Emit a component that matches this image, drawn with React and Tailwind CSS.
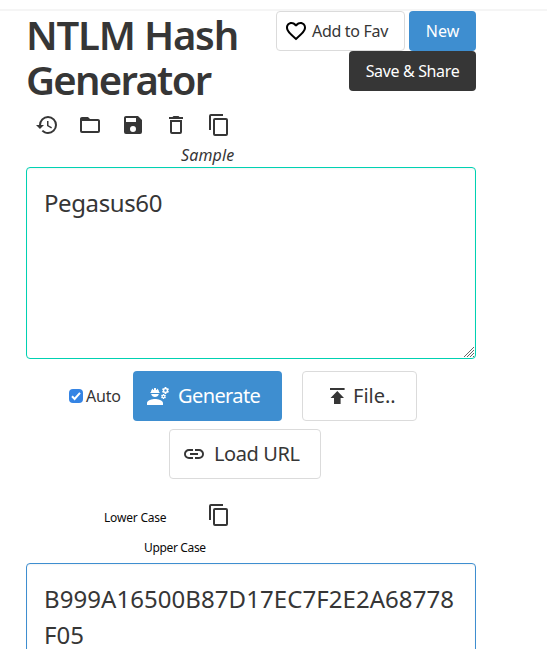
import React from "react";
import { MdEngineering } from "react-icons/md";

const paths = {
  history:
    "M13.5,8H12V13L16.28,15.54L17,14.33L13.5,12.25V8M13,3A9,9 0 0,0 4,12H1L4.96,16.03L9,12H6A7,7 0 0,1 13,5A7,7 0 0,1 20,12A7,7 0 0,1 13,19C11.07,19 9.32,18.21 8.06,16.94L6.64,18.36C8.27,20 10.5,21 13,21A9,9 0 0,0 22,12A9,9 0 0,0 13,3",
  folder:
    "M20,18H4V8H20M20,6H12L10,4H4C2.89,4 2,4.89 2,6V18A2,2 0 0,0 4,20H20A2,2 0 0,0 22,18V8C22,6.89 21.1,6 20,6Z",
  save: "M15,9H5V5H15M12,19A3,3 0 0,1 9,16A3,3 0 0,1 12,13A3,3 0 0,1 15,16A3,3 0 0,1 12,19M17,3H5C3.89,3 3,3.9 3,5V19A2,2 0 0,0 5,21H19A2,2 0 0,0 21,19V7L17,3Z",
  trash:
    "M6,19A2,2 0 0,0 8,21H16A2,2 0 0,0 18,19V7H6V19M8,9H16V19H8V9M15.5,4L14.5,3H9.5L8.5,4H5V6H19V4H15.5Z",
  copy: "M19,21H8V7H19M19,5H8A2,2 0 0,0 6,7V21A2,2 0 0,0 8,23H19A2,2 0 0,0 21,21V7A2,2 0 0,0 19,5M16,1H4A2,2 0 0,0 2,3V17H4V3H16V1Z",
  heart:
    "M12.1,18.55L12,18.65L11.89,18.55C7.14,14.24 4,11.39 4,8.5C4,6.5 5.5,5 7.5,5C9.04,5 10.54,6 11.07,7.36H12.93C13.46,6 14.96,5 16.5,5C18.5,5 20,6.5 20,8.5C20,11.39 16.86,14.24 12.1,18.55M16.5,3C14.76,3 13.09,3.81 12,5.08C10.91,3.81 9.24,3 7.5,3C4.42,3 2,5.41 2,8.5C2,12.27 5.4,15.36 10.55,20.03L12,21.35L13.45,20.03C18.6,15.36 22,12.27 22,8.5C22,5.41 19.58,3 16.5,3Z",
  link: "M3.9,12C3.9,10.29 5.29,8.9 7,8.9H11V7H7A5,5 0 0,0 2,12A5,5 0 0,0 7,17H11V15.1H7C5.29,15.1 3.9,13.71 3.9,12M8,13H16V11H8V13M17,7H13V8.9H17C18.71,8.9 20.1,10.29 20.1,12C20.1,13.71 18.71,15.1 17,15.1H13V17H17A5,5 0 0,0 22,12A5,5 0 0,0 17,7Z",
  upload: "M5,4V6H19.6V4H5M5.5,14H9V20H15.6V14H19L12.3,7L5.5,14Z",
};

function Icon({ name, className = "size-6" }) {
  return (
    <svg viewBox="0 0 24 24" fill="currentColor" className={`shrink-0 ${className}`}>
      <path d={paths[name]} />
    </svg>
  );
}

export default function App() {
  return (
    <div className="h-[649px] overflow-hidden bg-white font-['Noto_Sans',sans-serif] text-[#363636]">
      <div className="h-[11px] border-b-2 border-[#f5f5f5]" />
      <main className="ml-[26px] w-[450px]">
        <header className="flex h-[98px] justify-between">
          <h1 className="w-[230px] pt-px text-[40px] leading-[45px] font-semibold tracking-[-1.2px]">
            NTLM Hash <span className="tracking-[-1.7px]">Generator</span>
          </h1>
          <div className="flex w-[220px] flex-wrap content-start justify-end gap-x-1">
            <button className="flex h-10 w-[129px] items-center rounded border border-[#dbdbdb] pl-[7px] text-base whitespace-nowrap">
              <Icon name="heart" className="size-6 text-black" />
              <span className="ml-1 tracking-[-0.3px]">Add to Fav</span>
            </button>
            <button className="h-10 w-[67px] rounded bg-[#3e8ed0] text-base text-white">New</button>
            <button className="h-10 w-[127px] rounded bg-[#363636] text-base tracking-[-0.35px] whitespace-nowrap text-white">
              Save &amp; Share
            </button>
          </div>
        </header>

        <div className="flex h-8 items-center gap-[19px] pl-[9px]">
          <Icon name="history" />
          <Icon name="folder" />
          <Icon name="save" />
          <Icon name="trash" />
          <Icon name="copy" />
        </div>
        <div className="h-[26px] pl-[155px] text-base leading-[29px] tracking-[0.15px] italic">Sample</div>

        <div className="relative">
          <textarea
            className="block h-[192px] w-full resize-none rounded border border-[#00d1b2] px-[17px] pt-[17px] text-2xl leading-9 tracking-[-0.4px] shadow-[inset_0_1px_2px_rgba(10,10,10,0.05)] outline-none"
            defaultValue="Pegasus60"
          />
          <svg viewBox="0 0 12 12" className="absolute right-px bottom-px size-3" fill="none" stroke="#666" strokeWidth="1">
            <path d="M1 11L11 1M4 11L11 4M7 11L11 7M10 11L11 10" />
          </svg>
        </div>

        <div className="mt-3 flex h-[50px] items-center pl-[43px]">
          <label className="flex w-16 items-center gap-[3px] text-base tracking-[-0.2px] whitespace-nowrap">
            <span className="flex size-[14px] shrink-0 items-center justify-center rounded-sm bg-[#3584e4]">
              <svg viewBox="0 0 14 14" className="size-[14px]" fill="none" stroke="white" strokeWidth="2">
                <path d="M3 7.3L5.6 10L11 3.8" />
              </svg>
            </span>
            Auto
          </label>
          <button className="flex h-[50px] w-[149px] items-center rounded bg-[#3e8ed0] pl-[13px] text-xl whitespace-nowrap text-white">
            <MdEngineering className="size-6 shrink-0" />
            <span className="ml-2 tracking-[-0.6px]">Generate</span>
          </button>
          <button className="ml-5 flex h-[50px] w-[115px] items-center rounded border border-[#dbdbdb] pl-[22px] text-xl whitespace-nowrap">
            <Icon name="upload" />
            <span className="ml-1">File..</span>
          </button>
        </div>
        <button className="mt-2 ml-[143px] flex h-[50px] w-[152px] items-center rounded border border-[#dbdbdb] pl-3 text-xl whitespace-nowrap">
          <Icon name="link" />
          <span className="ml-2 tracking-[-0.4px]">Load URL</span>
        </button>

        <div className="mt-[21px] flex h-[33px] items-start pt-[3px] pl-[78px]">
          <span className="w-[103px] pt-[7px] text-xs tracking-[-0.2px] text-[#0a0a0a]">Lower Case</span>
          <Icon name="copy" />
        </div>
        <div className="h-[30px] pl-[118px] text-xs leading-[30px] tracking-[-0.35px] text-[#0a0a0a]">Upper Case</div>

        <div className="h-[192px] rounded border border-[#3e8ed0] px-[17px] pt-[17px] text-2xl leading-9 tracking-[0.06px] break-all shadow-[inset_0_1px_2px_rgba(10,10,10,0.05)]">
          B999A16500B87D17EC7F2E2A68778F05
        </div>
      </main>
    </div>
  );
}
